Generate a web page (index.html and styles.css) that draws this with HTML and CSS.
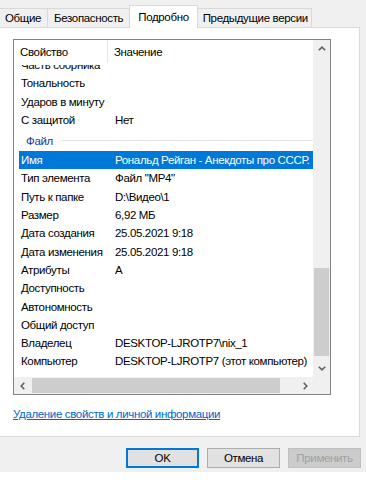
FILE: index.html
```html
<!DOCTYPE html>
<html>
<head>
    <meta charset="utf-8">
    <link rel="stylesheet" href="styles.css">
</head>
<body>
    <div class="dialog">
        <!-- Tabs -->
        <div class="tabs">
            <div class="tab tab-general">Общие</div>
            <div class="tab">Безопасность</div>
            <div class="tab active">Подробно</div>
            <div class="tab tab-versions">Предыдущие версии</div>
        </div>

        <!-- Tab page -->
        <div class="tab-page">
            <div class="listview">
                <div class="lv-content">
                    <div class="lv-header">
                        <div class="hd-name">Свойство</div>
                        <div class="hd-value">Значение</div>
                    </div>
                    <div class="lv-body">
                        <div class="lv-rows">
                            <div class="row"><span class="cell-name">Часть сборника</span><span class="cell-value"></span></div>
                            <div class="row"><span class="cell-name">Тональность</span><span class="cell-value"></span></div>
                            <div class="row"><span class="cell-name">Ударов в минуту</span><span class="cell-value"></span></div>
                            <div class="row"><span class="cell-name">С защитой</span><span class="cell-value">Нет</span></div>
                            <div class="group"><span class="group-title">Файл</span><span class="group-line"></span></div>
                            <div class="row selected"><span class="cell-name">Имя</span><span class="cell-value">Рональд Рейган - Анекдоты про СССР.</span></div>
                            <div class="row"><span class="cell-name">Тип элемента</span><span class="cell-value">Файл "MP4"</span></div>
                            <div class="row"><span class="cell-name">Путь к папке</span><span class="cell-value">D:\Видео\1</span></div>
                            <div class="row"><span class="cell-name">Размер</span><span class="cell-value">6,92 МБ</span></div>
                            <div class="row"><span class="cell-name">Дата создания</span><span class="cell-value">25.05.2021 9:18</span></div>
                            <div class="row"><span class="cell-name">Дата изменения</span><span class="cell-value">25.05.2021 9:18</span></div>
                            <div class="row"><span class="cell-name">Атрибуты</span><span class="cell-value">A</span></div>
                            <div class="row"><span class="cell-name">Доступность</span><span class="cell-value"></span></div>
                            <div class="row"><span class="cell-name">Автономность</span><span class="cell-value"></span></div>
                            <div class="row"><span class="cell-name">Общий доступ</span><span class="cell-value"></span></div>
                            <div class="row"><span class="cell-name">Владелец</span><span class="cell-value">DESKTOP-LJROTP7\nix_1</span></div>
                            <div class="row"><span class="cell-name">Компьютер</span><span class="cell-value">DESKTOP-LJROTP7 (этот компьютер)</span></div>
                        </div>
                    </div>
                </div>

                <!-- Vertical scrollbar -->
                <div class="vscroll">
                    <div class="sb-btn">
                        <svg width="8" height="5" viewBox="0 0 8 5"><polyline points="0.8,4.3 4,1.2 7.2,4.3" fill="none" stroke="#606060" stroke-width="1.6"/></svg>
                    </div>
                    <div class="sb-track"><div class="vthumb"></div></div>
                    <div class="sb-btn">
                        <svg width="8" height="5" viewBox="0 0 8 5"><polyline points="0.8,0.7 4,3.8 7.2,0.7" fill="none" stroke="#606060" stroke-width="1.6"/></svg>
                    </div>
                </div>

                <!-- Horizontal scrollbar -->
                <div class="hscroll">
                    <div class="sb-btn">
                        <svg width="5" height="8" viewBox="0 0 5 8"><polyline points="4.3,0.8 1.2,4 4.3,7.2" fill="none" stroke="#606060" stroke-width="1.6"/></svg>
                    </div>
                    <div class="sb-track"><div class="hthumb"></div></div>
                    <div class="sb-btn">
                        <svg width="5" height="8" viewBox="0 0 5 8"><polyline points="0.7,0.8 3.8,4 0.7,7.2" fill="none" stroke="#606060" stroke-width="1.6"/></svg>
                    </div>
                </div>
                <div class="sb-corner"></div>
            </div>

            <a class="remove-link" href="#">Удаление свойств и личной информации</a>
        </div>

        <!-- Dialog buttons -->
        <div class="buttons">
            <button class="btn default">OK</button>
            <button class="btn">Отмена</button>
            <button class="btn" disabled>Применить</button>
        </div>
        <div class="footer"></div>
    </div>
</body>
</html>
```

FILE: styles.css
```css
/* Global */
body {
    margin: 0;
    background-color: #f0f0f0;
    font-family: "Liberation Sans", Arial, sans-serif;
    font-size: 11.5px;
    letter-spacing: -0.35px;
    color: #000000;
}

.dialog {
    width: 366px;
    height: 483px;
    display: flex;
    flex-direction: column;
    overflow: hidden;
}

/* Tabs */
.tabs {
    display: flex;
    align-items: flex-end;
    height: 28px;
    margin-bottom: -1px;
}

.tab {
    height: 20px;
    line-height: 19px;
    padding: 0 6px;
    background-color: #f0f0f0;
    border-top: 1px solid #d9d9d9;
    border-right: 1px solid #d9d9d9;
    box-sizing: border-box;
    white-space: nowrap;
}

.tab-general {
    padding-left: 5px;
}

.tab-versions {
    padding: 0 3px 0 5px;
}

.tab.active {
    height: 23px;
    line-height: 22px;
    padding: 0 8px;
    margin-left: -1px;
    background-color: #ffffff;
    border-left: 1px solid #d9d9d9;
    position: relative;
    z-index: 1;
}

/* Tab page */
.tab-page {
    width: 360px;
    height: 410px;
    box-sizing: border-box;
    background-color: #ffffff;
    border: 1px solid #d9d9d9;
    border-left: none;
    padding: 11px 28px 0 13px;
}

/* List view */
.listview {
    display: grid;
    grid-template-columns: 1fr 17px;
    grid-template-rows: 1fr 17px;
    height: 356px;
    box-sizing: border-box;
    border: 1px solid #828282;
}

.lv-content {
    display: flex;
    flex-direction: column;
    overflow: hidden;
    min-width: 0;
}

.lv-header {
    display: flex;
    height: 25px;
    flex-shrink: 0;
    line-height: 25px;
    background-color: #ffffff;
}

.hd-name {
    width: 94px;
    height: 23px;
    box-sizing: border-box;
    padding-left: 6px;
    border-right: 1px solid #e5e5e5;
}

.hd-value {
    padding-left: 6px;
}

.lv-body {
    flex: 1;
    overflow: hidden;
}

.lv-rows {
    margin-top: -9px;
}

.row {
    display: flex;
    height: 18.3px;
    line-height: 18px;
    margin-left: 5px;
    white-space: nowrap;
}

.cell-name {
    width: 89px;
    flex-shrink: 0;
    box-sizing: border-box;
    padding-left: 2px;
}

.cell-value {
    padding-left: 7px;
}

.row.selected {
    background-color: #0078d7;
    color: #ffffff;
}

.group {
    display: flex;
    align-items: center;
    height: 22px;
    padding-top: 1px;
    box-sizing: border-box;
    margin-left: 12px;
}

.group-title {
    color: #1e3a8c;
}

.group-line {
    flex: 1;
    height: 1px;
    margin-left: 9px;
    background-color: #e2e2e2;
}

/* Scrollbars */
.vscroll {
    display: flex;
    flex-direction: column;
    background-color: #f0f0f0;
}

.hscroll {
    display: flex;
    background-color: #f0f0f0;
}

.sb-btn {
    width: 17px;
    height: 17px;
    flex-shrink: 0;
    display: flex;
    align-items: center;
    justify-content: center;
}

.hscroll .sb-btn {
    width: 16px;
}

.sb-track {
    flex: 1;
    display: flex;
    flex-direction: column;
}

.hscroll .sb-track {
    flex-direction: row;
}

.vthumb {
    margin: 211px 1px 0 1px;
    height: 88px;
    background-color: #cdcdcd;
}

.hthumb {
    margin: 1px 0 0 2px;
    width: 248px;
    height: 15px;
    background-color: #cdcdcd;
}

.sb-corner {
    background-color: #f0f0f0;
}

/* Link */
.remove-link {
    display: inline-block;
    margin-top: 12px;
    line-height: 15px;
    color: #0066cc;
    text-decoration: underline;
}

/* Buttons */
.buttons {
    display: flex;
    justify-content: flex-end;
    gap: 8px;
    height: 35px;
    box-sizing: border-box;
    padding: 11px 5px 0 0;
}

.btn {
    width: 73px;
    height: 20px;
    padding: 0;
    background-color: #e1e1e1;
    border: 1px solid #adadad;
    font-family: inherit;
    font-size: 11.5px;
    letter-spacing: -0.35px;
    color: #000000;
}

.btn.default {
    border: 2px solid #0078d7;
}

.btn:disabled {
    background-color: #cccccc;
    border-color: #bfbfbf;
    color: #a0a0a0;
}

.footer {
    flex: 1;
    background-color: #ffffff;
}
```
